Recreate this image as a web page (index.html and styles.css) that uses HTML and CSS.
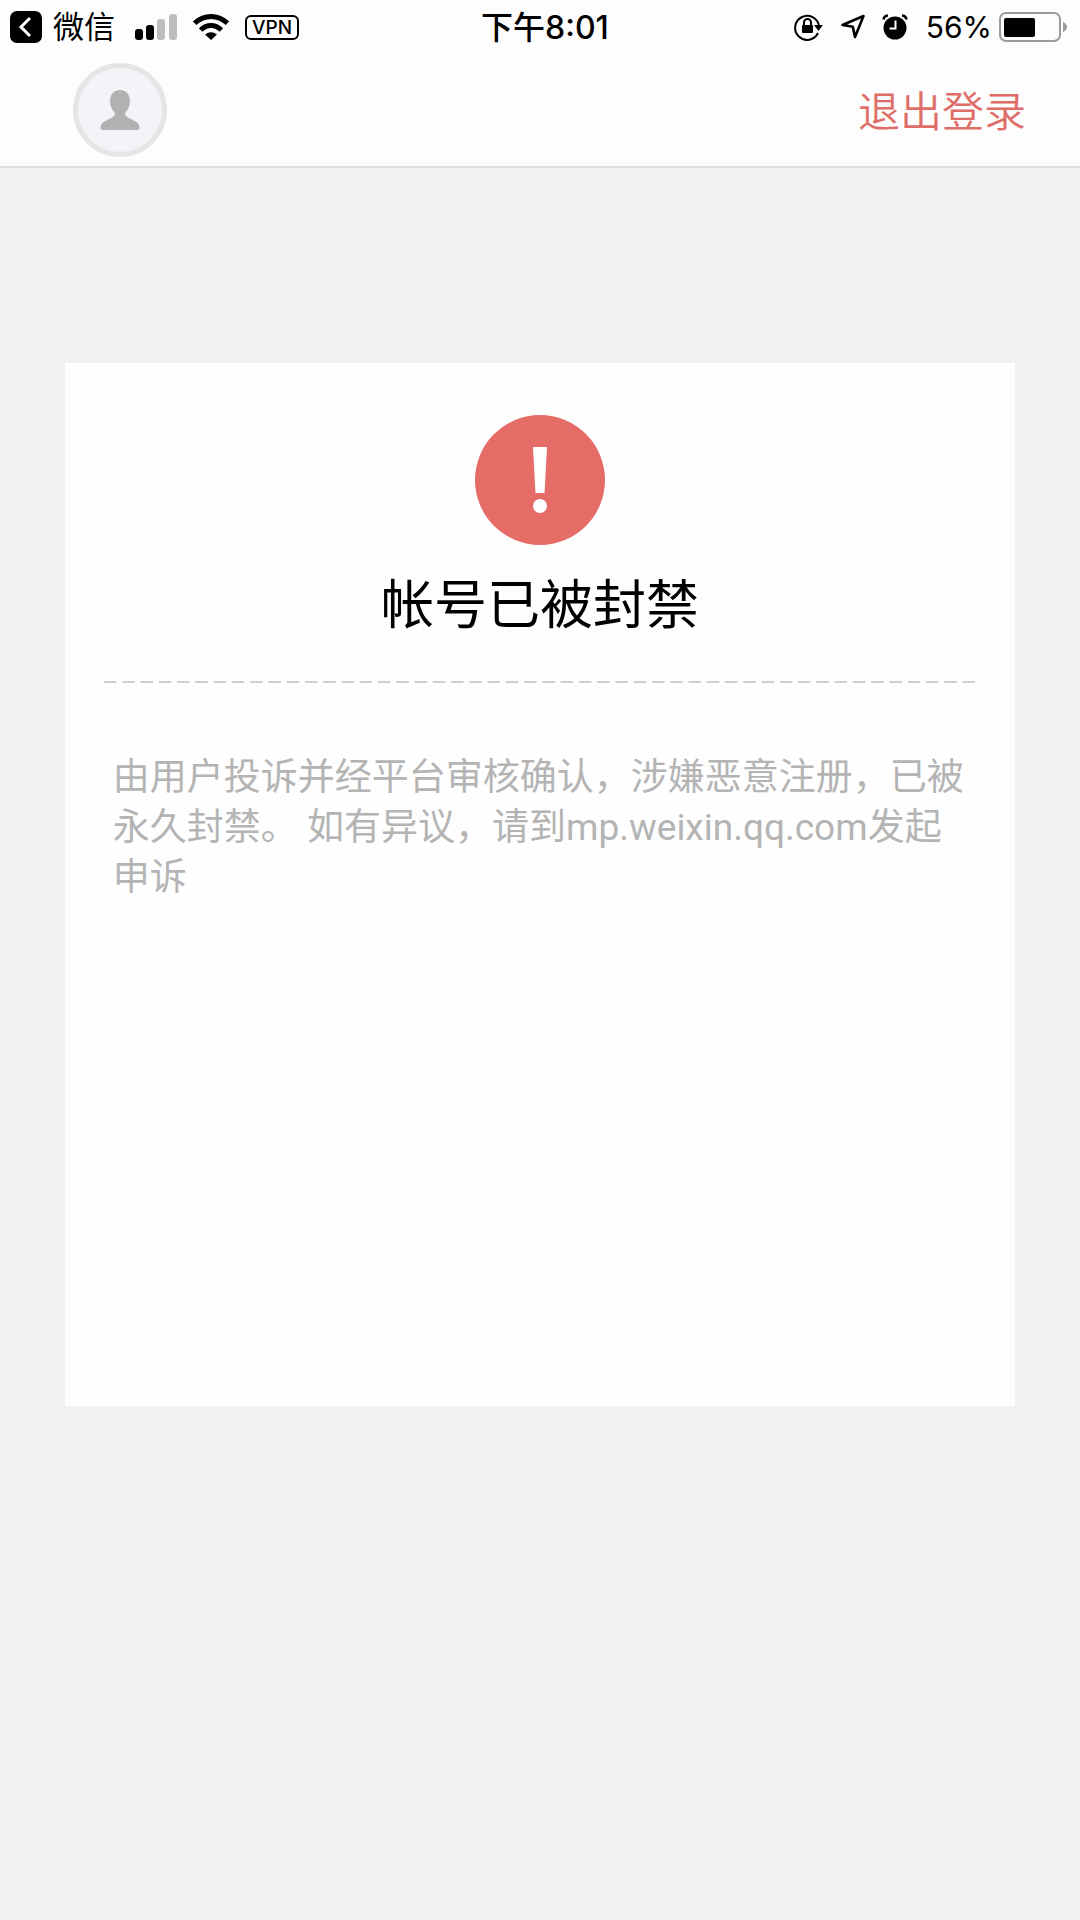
FILE: index.html
```html
<!DOCTYPE html>
<html lang="zh-CN">
<head>
<meta charset="utf-8">
<meta name="viewport" content="width=device-width, initial-scale=1">
<title>帐号已被封禁</title>
<link rel="stylesheet" href="styles.css">
</head>
<body>
<header class="header">
  <div class="status">
    <div class="status-left">
      <a class="back" href="#">
        <svg width="32" height="32" viewBox="0 0 32 32" aria-hidden="true"><rect width="32" height="32" rx="7"/><path d="M20 7l-9 9 9 9" fill="none" stroke="#fff" stroke-width="3"/></svg>
        <span>微信</span>
      </a>
      <svg class="signal" width="42" height="26" viewBox="0 0 42 26" aria-hidden="true"><rect y="15" width="8" height="11" rx="3"/><rect x="11" y="11" width="8" height="15" rx="3"/><rect x="22" y="5" width="8" height="21" rx="3" fill="#bdbdbd"/><rect x="34" width="8" height="26" rx="3" fill="#bdbdbd"/></svg>
      <svg class="wifi" width="36" height="26" viewBox="0 0 36 26" aria-hidden="true"><g fill="none" stroke="#000" stroke-width="5"><path d="M1.600 9.200Q9 2.500 18 2.500T34.400 9.200"/><path d="M7.600 16Q12.200 11.500 18 11.500T28.400 16"/></g><path d="M12 20.500Q18 16 24 20.500L18 26z"/></svg>
      <span class="vpn">VPN</span>
    </div>
    <time class="time">下午8:01</time>
    <div class="status-right">
      <svg class="lock" width="30" height="28" viewBox="0 0 30 28" aria-hidden="true"><path d="M24 20A12 12 0 1 1 25 13" fill="none" stroke="#000" stroke-width="2"/><path d="M20 12h9l-4.500 6z"/><rect x="8" y="12" width="11" height="8" rx="1"/><path d="M10 12.500V9.500a3.500 3.500 0 0 1 7 0v3" fill="none" stroke="#000" stroke-width="2"/></svg>
      <svg class="arrow" width="26" height="26" viewBox="0 0 26 26" aria-hidden="true"><path d="M23.500 2L15 23l-2.200-10.200L2.500 11z" fill="none" stroke="#000" stroke-width="2.600" stroke-linejoin="round"/></svg>
      <svg class="alarm" width="26" height="26" viewBox="0 0 26 26" aria-hidden="true"><circle cx="13" cy="14" r="11.500"/><path d="M1.500 5.500Q2 2 6 1.500M24.500 5.500Q24 2 20 1.500" fill="none" stroke="#000" stroke-width="2.500"/><path d="M13.500 6.500v8H7.500" fill="none" stroke="#fff" stroke-width="2"/></svg>
      <span>56%</span>
      <svg class="battery" width="68" height="30" viewBox="0 0 68 30" aria-hidden="true"><rect x="1" y="1" width="60" height="28" rx="6" fill="none" stroke="#9b9b9b" stroke-width="2"/><rect x="5" y="6" width="31" height="19" rx="2"/><path d="M64 10q4 2 4 5t-4 5z" fill="#9b9b9b"/></svg>
    </div>
  </div>
  <div class="nav">
    <div class="avatar">
      <svg width="40" height="42" viewBox="0 0 40 42" aria-hidden="true"><path d="M20 1C13.500 1 10 6 10 12c0 5 2 8.500 4.500 11.500 1 2.500-.5 4-3.500 5.500L3.500 33C1 34.500.5 36 .5 38.500c0 2 .8 2.500 2.500 2.500h34c1.700 0 2.500-.5 2.500-2.500 0-2.500-.5-4-3-5.500L29 29c-3-1.500-4.500-3-3.500-5.500C28 20.500 30 17 30 12 30 6 26.500 1 20 1z" fill="#b2b2b2"/></svg>
    </div>
    <button class="logout" type="button">退出登录</button>
  </div>
</header>
<main class="main">
  <section class="card">
    <svg class="warn" width="130" height="130" viewBox="0 0 130 130" aria-hidden="true"><circle cx="65" cy="65" r="65" fill="#e56c67"/><path d="M58 32h14l-2.500 46h-9z" fill="#fff"/><circle cx="65" cy="91" r="7" fill="#fff"/></svg>
    <h1 class="title">帐号已被封禁</h1>
    <div class="divider"></div>
    <p class="message">由用户投诉并经平台审核确认，涉嫌恶意注册，已被永久封禁。 如有异议，请到mp.weixin.qq.com发起申诉</p>
  </section>
</main>
</body>
</html>
```
FILE: styles.css
```css
* { box-sizing: border-box; }

body {
  margin: 0;
  min-height: 100vh;
  background: #f1f1f1;
  color: #000;
  font-family: Inter, "Noto Sans CJK SC", sans-serif;
}

svg { display: block; flex: none; }

.header {
  background: #fdfdfd;
  border-bottom: 2px solid #dedede;
}

.status {
  display: grid;
  grid-template-columns: 1fr auto 1fr;
  align-items: center;
  height: 54px;
  padding: 0 10px;
  font-size: 31px;
  line-height: 40px;
}

.status-left,
.status-right,
.back {
  display: flex;
  align-items: center;
}

.status-right {
  justify-content: flex-end;
  padding-right: 3px;
  font-size: 30px;
}

.back {
  gap: 11px;
  color: inherit;
  text-decoration: none;
}

.signal { margin-left: 20px; }
.wifi { margin-left: 16px; }

.vpn {
  margin-left: 16px;
  padding: 0 5px;
  border: 2px solid #000;
  border-radius: 6px;
  font-size: 19px;
  font-weight: 500;
  line-height: 21px;
}

.time {
  padding: 2px 0 0 10px;
  font-size: 32px;
  font-weight: 500;
}

.arrow { margin-left: 16px; }
.alarm { margin: 0 18px 0 16px; }
.battery { margin-left: 7px; }

.nav {
  display: flex;
  align-items: center;
  justify-content: space-between;
  height: 112px;
  padding: 0 54px 0 73px;
}

.avatar {
  display: flex;
  align-items: center;
  justify-content: center;
  width: 94px;
  height: 94px;
  border: 5px solid #e5e5e6;
  border-radius: 50%;
  background: #f4f4f8;
}

.logout {
  padding: 4px 0 0;
  border: 0;
  background: none;
  color: #df6e68;
  font: inherit;
  font-size: 42px;
  font-weight: 350;
  line-height: 60px;
}

.main { padding: 195px 6% 64px; }

.card {
  display: flex;
  flex-direction: column;
  align-items: center;
  min-height: 1043px;
  padding: 52px 34px 52px 39px;
  background: #fefefe;
}

.warn,
.title { margin-right: 5px; }

.title {
  margin-top: 20px;
  margin-bottom: 0;
  font-size: 53px;
  font-weight: 400;
  line-height: 80px;
}

.divider {
  align-self: stretch;
  height: 2px;
  margin: 36px 0 70px;
  background: linear-gradient(to right, #cfcfcf 71%, transparent 71%) 0 0 / calc(100% / 48) 2px repeat-x;
}

.message {
  align-self: stretch;
  margin: 0;
  padding: 0 12px 0 9px;
  color: #b4b4b4;
  font-family: Roboto, "Noto Sans CJK SC", sans-serif;
  font-size: 37px;
  font-weight: 400;
  line-height: 50px;
}
```
